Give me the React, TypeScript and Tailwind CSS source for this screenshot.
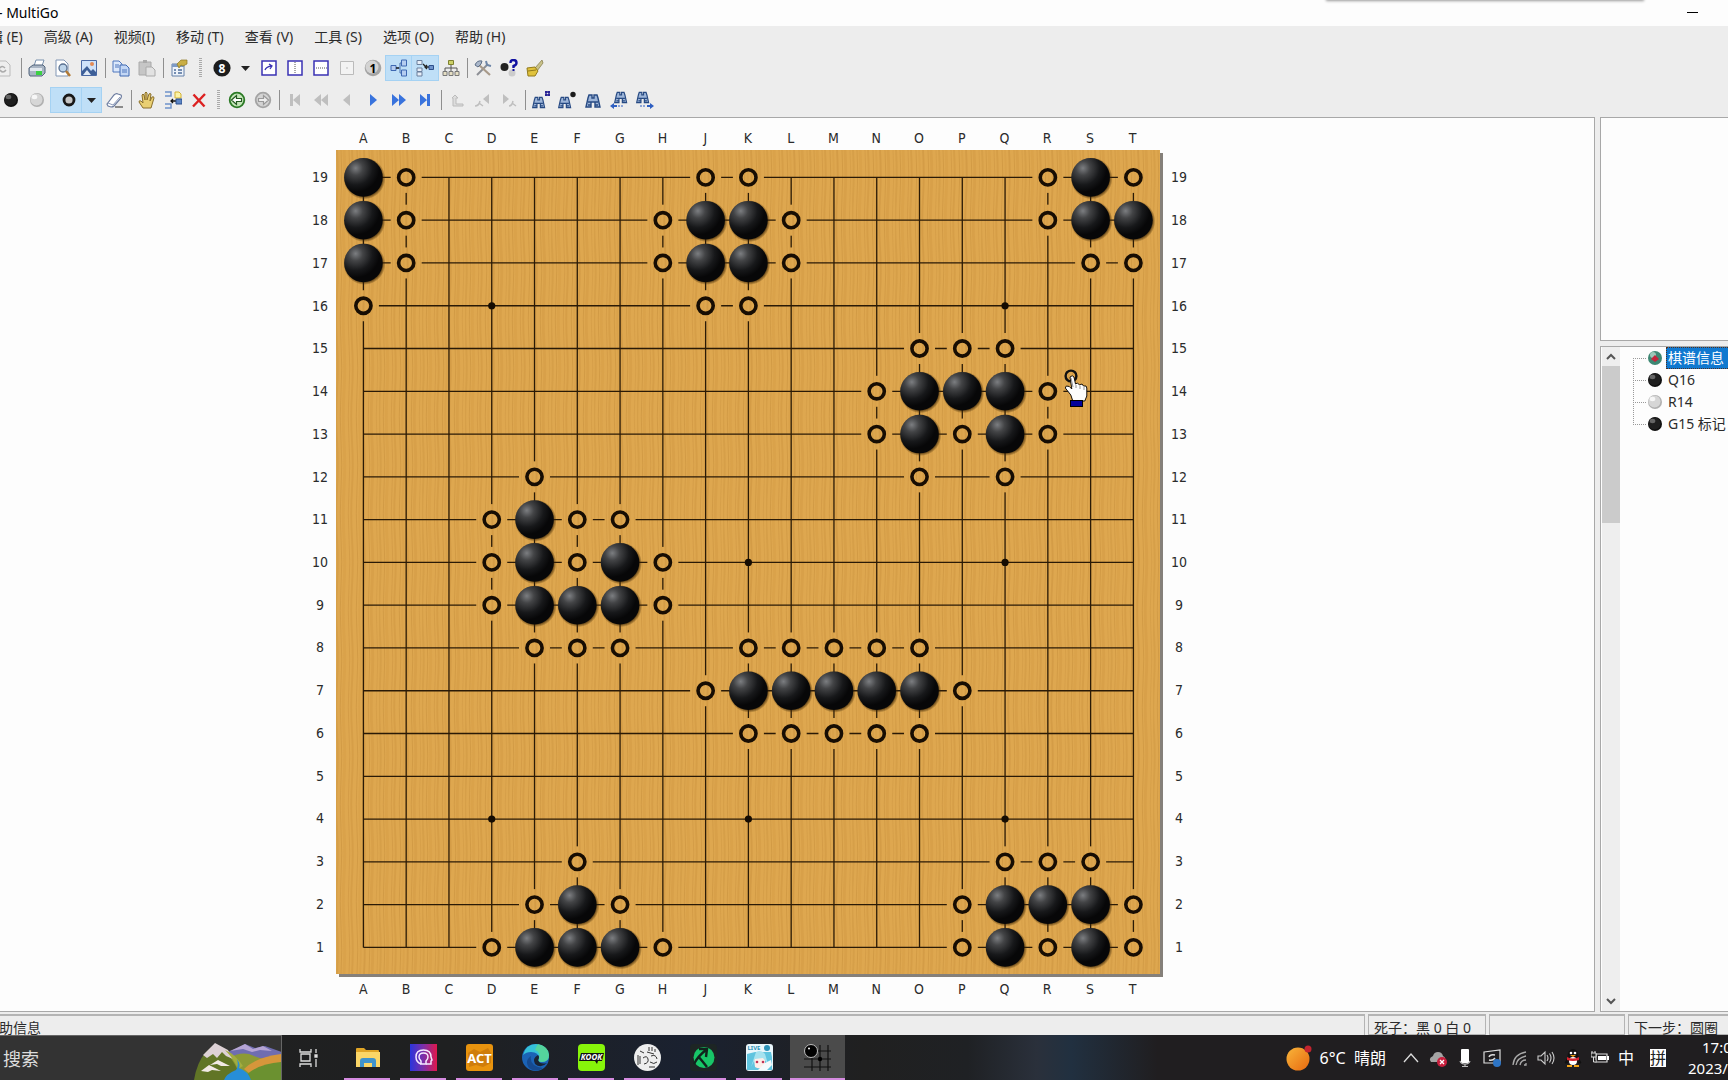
import { ReactNode } from 'react';

const COLS = 'ABCDEFGHJKLMNOPQRST'.split('');
const ROWS = Array.from({ length: 19 }, (_, i) => 19 - i);

const STONES = 'A19 A18 A17 J18 K18 J17 K17 S19 S18 T18 O14 P14 Q14 O13 Q13 E11 E10 G10 E9 F9 G9 K7 L7 M7 N7 O7 F2 E1 F1 G1 Q2 R2 S2 Q1 S1'.split(' ');
const MARKS = ('B19 B18 B17 A16 J19 K19 H18 L18 H17 L17 J16 K16 R19 T19 R18 S17 T17 O15 P15 Q15 N14 R14 N13 P13 R13 O12 Q12 '
    + 'E12 D11 F11 G11 D10 F10 H10 D9 H9 E8 F8 G8 K8 L8 M8 N8 O8 J7 P7 K6 L6 M6 N6 O6 F3 E2 G2 D1 H1 Q3 R3 S3 P2 T2 P1 R1 T1').split(' ');
const STARS = 'D16 Q16 K10 Q10 D4 K4 Q4'.split(' ');

const line = (i: number) => 27.4 + (i * 770) / 18;
const point = (name: string) => ({ x: line(COLS.indexOf(name[0])), y: line(19 - Number(name.slice(1))) });

const streaks = [[1, 2, 0.3], [5, 1, 0.5], [8, 3, 0.2], [13, 1, 0.4], [16, 2, 0.35], [21, 1, 0.5], [24, 2, 0.2], [28, 2, 0.4], [33, 1, 0.5], [36, 3, 0.25], [41, 1, 0.3]];

function Board() {
    return (
        <svg width="827" height="827" viewBox="0 0 827 827" className="block">
            <defs>
                <radialGradient id="stone" cx="0.3" cy="0.26" r="0.62">
                    <stop offset="0" stopColor="#7c7e81" />
                    <stop offset="0.3" stopColor="#434446" />
                    <stop offset="0.7" stopColor="#17181a" />
                    <stop offset="1" stopColor="#070708" />
                </radialGradient>
                <radialGradient id="shade">
                    <stop offset="0.86" stopColor="#3a2404" stopOpacity="0.7" />
                    <stop offset="1" stopColor="#3a2404" stopOpacity="0" />
                </radialGradient>
                <pattern id="wood" width="43" height="97" patternUnits="userSpaceOnUse">
                    <rect width="43" height="97" fill="#dea74f" />
                    {streaks.map(([x, w, o]) => (
                        <path key={x} d={`M${x} 0q1.5 24 0 48t0 49`} stroke="#c68d39" strokeWidth={w} opacity={o} fill="none" />
                    ))}
                </pattern>
                <mask id="gaps" maskUnits="userSpaceOnUse" x="0" y="0" width="827" height="827">
                    <rect width="827" height="827" fill="#fff" />
                    {MARKS.map((m) => <rect key={m} x={point(m).x - 15.5} y={point(m).y - 15.5} width="31" height="31" fill="#000" />)}
                </mask>
            </defs>
            <rect x="3" y="3" width="824" height="824" fill="#85807a" />
            <rect width="824" height="824" fill="url(#wood)" />
            <g mask="url(#gaps)" stroke="#2a1a06" strokeWidth="1.3">
                {COLS.map((c, i) => (
                    <g key={c}>
                        <path d={`M${line(i)} ${line(0)}V${line(18)}`} />
                        <path d={`M${line(0)} ${line(i)}H${line(18)}`} />
                    </g>
                ))}
            </g>
            {STARS.map((s) => <circle key={s} cx={point(s).x} cy={point(s).y} r="3.6" fill="#150c02" />)}
            {MARKS.map((m) => <circle key={m} cx={point(m).x} cy={point(m).y} r="7.6" fill="none" stroke="#170d03" strokeWidth="3.6" />)}
            {STONES.map((s) => (
                <g key={s}>
                    <circle cx={point(s).x + 1} cy={point(s).y + 1} r="21" fill="url(#shade)" />
                    <circle cx={point(s).x} cy={point(s).y} r="19.3" fill="url(#stone)" />
                </g>
            ))}
            {/* hand cursor */}
            <g transform="translate(-1 0)">
                <circle cx="736" cy="226" r="5.4" fill="none" stroke="#111" strokeWidth="2.4" />
                <path d="M735 227q2.500-2.500 4 0l1.500 7 2-1 2 2 2.500-1 1.500 2 2.500 0 .8 2v8l-2 5h-12l-2-6-5.500-7 1-2 3 .5 2.500 2.500z" fill="#fdfdfd" stroke="#15100a" strokeWidth="1" />
                <path d="M736 228l2 9M741 235v3M745 236v3M749 237v3" stroke="#777" strokeWidth="0.8" />
                <rect x="735.500" y="250.500" width="12" height="6" fill="#02029a" stroke="#000" />
            </g>
        </svg>
    );
}

function Icon({ children, size = 18 }: { children: ReactNode, size?: number }) {
    return <svg width={size} height={size} viewBox="0 0 18 18" fill="none" className="shrink-0">{children}</svg>;
}

const Ball = ({ fill, rim, shine }: { fill: string, rim: string, shine: string }) => (
    <>
        <circle cx="9" cy="9" r="7" fill={rim} />
        <circle cx="8.500" cy="8.500" r="6" fill={fill} />
        <ellipse cx="6.500" cy="6" rx="2.800" ry="2.200" fill={shine} opacity="0.8" />
    </>
);

const Binoculars = () => (
    <path d="M2 16l2-9 1-3h3v3h2V4h3l1 3 2 9h-5v-5H7v5z M4 11h3M11 11h3M4 14h3M11 14h3" fill="#9db5d8" stroke="#274a83" strokeWidth="1.400" />
);

const Arrow = ({ color, d }: { color: string, d: string }) => <path d={d} fill={color} />;

const blue = '#3973dd';
const gray = '#bfbfbf';

const icons: Record<string, ReactNode> = {
    refresh: <><path d="M0 2h10l4 4v11H0z" fill="#eee" stroke="#bbb" /><path d="M4 9q2-3 5 0M10 11q-3 4-6 0" stroke="#aaa" strokeWidth="1.500" /></>,
    print: <>
        <path d="M6 7l2-6h8l-2 6z" fill="#fff" stroke="#7890ad" />
        <path d="M1 9l4-3h10l2 2v6l-3 3H2l-1-2z" fill="#a9b5c4" stroke="#53657c" />
        <path d="M2 9h12v3H2z" fill="#e2e8ef" /><path d="M8 12h6v4H8z" fill="#3cd044" />
    </>,
    preview: <>
        <path d="M2 1h8l4 4v12H2z" fill="#fff" stroke="#8297b5" />
        <circle cx="9" cy="9" r="4" fill="#bdd4ea" stroke="#5a7191" strokeWidth="1.300" />
        <path d="M12 12l4 5" stroke="#b17a35" strokeWidth="2.500" />
    </>,
    picture: <>
        <path d="M1.500 1.500h15v15h-15z" fill="#cfe2fa" stroke="#4a69a4" />
        <path d="M2 16V12l5-5 4 5 2-2 3 3v3z" fill="#3d5f98" /><path d="M3 16l4-5 4 5z" fill="#dfe9f6" />
        <circle cx="12" cy="5" r="2" fill="#e38a55" />
    </>,
    copy: <>
        <path d="M1 2h6l3 3v8H1z" fill="#dbe8fb" stroke="#4f77bd" />
        <path d="M8 6h6l3 3v8H8z" fill="#c3d7f5" stroke="#3e68b2" /><path d="M3 6h4M3 8h4M10 11h5M10 13h5" stroke="#4f77bd" />
    </>,
    paste: <><path d="M1 3h12v13H1z" fill="#c6c6c6" stroke="#aaa" /><path d="M5 1h4v3H5z" fill="#aaa" /><path d="M8 8h6l3 3v6H8z" fill="#e2e2e2" stroke="#aaa" /></>,
    props: <>
        <path d="M2 5h12v12H2z" fill="#eef3fa" stroke="#6480a8" /><path d="M2 5h12v3H2z" fill="#7d9ac6" />
        <path d="M4 11h2M4 14h2M8 11h4M8 14h4" stroke="#4e6d9b" strokeWidth="1.300" />
        <path d="M7 5l4-4 6 0v4l-4 2-2-1-2 3z" fill="#c9ae45" stroke="#8d7720" strokeWidth="0.700" />
    </>,
    eight: <><circle cx="9" cy="9" r="8.600" fill="#1d1d1d" /><text x="9" y="13.500" textAnchor="middle" fontSize="12" fontWeight="700" fill="#fff">8</text></>,
    one: <><circle cx="9" cy="9" r="8.300" fill="#a4a4a4" /><circle cx="8" cy="8" r="6.500" fill="#d3d3d3" /><text x="9" y="13.500" textAnchor="middle" fontSize="12" fontWeight="700" fill="#000">1</text></>,
    boxArrow: <><path d="M2 2h14v14H2z" fill="#fff" stroke="#3a32b4" strokeWidth="1.500" /><path d="M5 11q1-3 6-4M9 5l3 2-2 3" stroke="#3a32b4" strokeWidth="1.300" /></>,
    boxV: <><path d="M2 2h14v14H2z" fill="#fff" stroke="#3a32b4" strokeWidth="1.500" /><path d="M9 3v12" stroke="#555" strokeDasharray="1 1" /></>,
    boxH: <><path d="M2 2h14v14H2z" fill="#fff" stroke="#3a32b4" strokeWidth="1.500" /><path d="M4 9h11" stroke="#555" strokeDasharray="1 1" /></>,
    boxDot: <><path d="M2.500 2.500h13v13h-13z" fill="#f3f3f3" stroke="#bbb" /><path d="M8 9h2" stroke="#bbb" /></>,
    tree: <>
        <path d="M6 9h4M10 4v10M10 4h2M10 14h2" stroke="#4b71ad" />
        <path d="M1 6.500h5v5H1zM11.500 1h5v6h-5zM11.500 11h5v6h-5z" fill="#b5cdf0" stroke="#3e68b2" /><path d="M6 9h3" stroke="#222" strokeWidth="1.500" />
    </>,
    treeCut: <>
        <path d="M1 1.500h5v4H1zM1 9h5v3.500H1zM1 13h5v4H1z" fill="#e7eef8" stroke="#6b7f9c" />
        <path d="M7 5l2 2M9 8h4M11 6l-2 2 2 2" stroke="#222" strokeWidth="1.300" /><path d="M13 6.500h4.500v4H13z" fill="#6f94cc" stroke="#2d4f8b" />
    </>,
    org: <>
        <path d="M9 5v4M3 12V9h12v3M9 9v3" stroke="#555" /><path d="M6.500 1.500h5v4h-5z" fill="#ccd068" stroke="#7e8130" />
        <path d="M1 12.500h4v4H1zM7 12.500h4v4H7zM13 12.500h4v4h-4z" fill="#e6dfc4" stroke="#777" />
    </>,
    tools: <>
        <path d="M3 16L14 5" stroke="#8d8f95" strokeWidth="2" /><path d="M12 2l1 4 4 1" stroke="#6e86a8" strokeWidth="2" />
        <path d="M5 6l11 10" stroke="#a89a8a" strokeWidth="2.200" /><path d="M1 6q2-5 7-4l-1 3-3 3z" fill="#aab7ca" stroke="#5e6f88" />
    </>,
    help: <>
        <circle cx="4.500" cy="8" r="4" fill="#222" /><circle cx="12" cy="14" r="3.500" fill="#ccc" />
        <path d="M10.500 4q0-3 3-3t3 3q0 2-3 3v2" stroke="#1010a0" strokeWidth="2.400" /><path d="M12.500 10h2v2h-2z" fill="#1010a0" />
    </>,
    brush: <><path d="M9 9l7-8 1 3-6 8z" fill="#c9c28a" stroke="#8a8250" strokeWidth="0.800" /><path d="M1 9l8-1 3 4-3 5-7 0z" fill="#e0c23c" stroke="#927a1d" /><path d="M2 12l8-1" stroke="#927a1d" /></>,
    black: <Ball fill="#1f1f1f" rim="#101010" shine="#777" />,
    white: <Ball fill="#d6d6d6" rim="#b0b0b0" shine="#fff" />,
    ring: <circle cx="9" cy="9" r="5" fill="#c6c6c6" stroke="#181818" strokeWidth="2.800" />,
    eraser: <><path d="M1 13l7-9q2-2 4-1l3 1q1 1 0 3l-7 8q-1 1-3 1l-3-1z" fill="#fff" stroke="#6d7da0" strokeWidth="1.200" /><path d="M2 12l5 2 7-8" stroke="#8b9aba" /><path d="M9 16h8" stroke="#555" strokeWidth="1.300" /></>,
    hand: <path d="M5 17l-4-6q0-2 2-1l2 2-1-8q1-2 2 0l1 5V2q1-2 2 0v7l2-6q1-1 2 0l-1 7 2-4q2-1 2 1l-3 10z" fill="#e9cf72" stroke="#8a6f2c" />,
    branch: <>
        <path d="M1 1h6v4H1M1 13h6v4H1" stroke="#6f93ca" strokeWidth="1.500" /><path d="M11 1h4l2 2v4h-6z" fill="#fbf3a8" stroke="#d3b234" />
        <path d="M7 10h5M9 8l-2 2 2 2" stroke="#111" strokeWidth="1.300" /><path d="M12 8h6v5h-6z" fill="#5d86c6" stroke="#2d4f8b" />
    </>,
    remove: <path d="M3.500 3.500l11 12M15 3L3 15.500" stroke="#dc2020" strokeWidth="2.400" />,
    back: <><circle cx="9" cy="9" r="7.300" fill="#c4e5b9" stroke="#2b7a25" strokeWidth="1.800" /><path d="M3.500 9l5-4.500v3h5v3h-5v3z" fill="#fff" stroke="#245a20" strokeWidth="1.200" /></>,
    forward: <><circle cx="9" cy="9" r="7.300" fill="#d3d3d3" stroke="#a4a4a4" strokeWidth="1.800" /><path d="M14.500 9l-5-4.500v3h-5v3h5v3z" fill="#eee" stroke="#999" strokeWidth="1.200" /></>,
    first: <Arrow color={gray} d="M4 3h3v12H4zM14 3v12L7 9z" />,
    rewind: <Arrow color={gray} d="M9 3v12L2 9zM16 3v12L9 9z" />,
    prev: <Arrow color={gray} d="M12 3v12L5 9z" />,
    next: <Arrow color={blue} d="M6 3v12l7-6z" />,
    fast: <Arrow color={blue} d="M2 3v12l7-6zM9 3v12l7-6z" />,
    last: <Arrow color={blue} d="M4 3v12l7-6zM11 3h3v12h-3z" />,
    up: <path d="M4 7l3-3 3 3H8v6h7v2H5V7z" fill="#ddd" stroke="#bbb" />,
    varPrev: <><path d="M15 3v10L9 8z" fill={gray} /><path d="M1 15q4 0 5-5M5 12l4 3" stroke={gray} strokeWidth="1.500" /></>,
    varNext: <><path d="M3 3v10l6-5z" fill={gray} /><path d="M9 15q3 0 4-5M12 12l4 3" stroke={gray} strokeWidth="1.500" /></>,
    findMark: <><g transform="translate(-1 3) scale(.85)"><Binoculars /></g><path d="M13 1h5M13 4h5M14 0v5M17 0v5" stroke="#15108c" strokeWidth="1.300" /></>,
    findStone: <><g transform="translate(-1 3) scale(.85)"><Binoculars /></g><circle cx="15" cy="3.500" r="2.700" fill="#1b1b1b" /></>,
    find: <Binoculars />,
    findPrev: <><g transform="translate(3 -2) scale(.85)"><Binoculars /></g><path d="M0 15l4-3v2h3v2H4v2z" fill="#2e5fc2" /><path d="M8 15h6" stroke="#2e5fc2" strokeDasharray="2 1" /></>,
    findNext: <><g transform="translate(-1 -2) scale(.85)"><Binoculars /></g><path d="M18 15l-4-3v2h-3v2h3v2z" fill="#2e5fc2" /><path d="M4 15h6" stroke="#2e5fc2" strokeDasharray="2 1" /></>,
};

function Tool({ name, active = false }: { name: string, active?: boolean }) {
    return (
        <button type="button" aria-label={name} className={active ? 'flex h-6 w-[26px] shrink-0 items-center justify-center bg-[#bfdff7] outline outline-[#a5d2f3]' : 'flex h-6 w-[26px] shrink-0 items-center justify-center'}>
            <Icon>{icons[name]}</Icon>
        </button>
    );
}

const Tools = ({ names }: { names: string }) => <>{names.split(' ').map((n) => <Tool key={n} name={n} />)}</>;
const Sep = () => <span className="flex h-5 w-[6px] shrink-0 justify-center"><span className="w-px bg-[#8f8f8f]" /></span>;
const Grip = ({ width }: { width: string }) => (
    <span className={`flex h-5 shrink-0 justify-center ${width}`}><span className="w-[3px] bg-[repeating-linear-gradient(#aaa_0_1px,#eee_1px_2px)]" /></span>
);
const Caret = () => <svg width="9" height="5" viewBox="0 0 9 5"><path d="M0 0h9L4.500 5z" fill="#222" /></svg>;

const menu = ['编辑 (E)', '高级 (A)', '视频(I)', '移动 (T)', '查看 (V)', '工具 (S)', '选项 (O)', '帮助 (H)'];

function ColumnLabels() {
    return (
        <div className="col-start-2 mr-[3px] grid h-6 grid-cols-[repeat(19,1fr)] items-center px-[6px] text-center">
            {COLS.map((c) => <span key={c}>{c}</span>)}
        </div>
    );
}

function RowLabels() {
    return (
        <div className="mb-[3px] grid grid-rows-[repeat(19,1fr)] items-center py-[6px] text-center">
            {ROWS.map((r) => <span key={r}>{r}</span>)}
        </div>
    );
}

const moves = [
    { text: '棋谱信息 注释', icon: <><circle cx="9" cy="9" r="7" fill="#3d8773" /><circle cx="7" cy="6" r="3" fill="#9cc7b8" /><path d="M5 10l4-4 4 4-4 3z" fill="#c4243c" /></>, selected: true },
    { text: 'Q16', icon: icons.black },
    { text: 'R14', icon: icons.white },
    { text: 'G15 标记', icon: icons.black },
];

function Sidebar() {
    return (
        <aside className="flex w-[128px] shrink-0 flex-col gap-[5px]">
            <div className="h-[224px] border border-r-0 border-[#a8a8a8] bg-[#fdfdfd]" />
            <div className="flex flex-1 border border-r-0 border-[#a8a8a8] bg-[#fdfdfd]">
                <div className="ml-px flex w-[18px] shrink-0 flex-col items-center bg-[#eeeeee] text-[#555]">
                    <button type="button" aria-label="向上滚动" className="flex h-[19px] items-center">
                        <svg width="10" height="7" viewBox="0 0 10 7" fill="none"><path d="M1 6l4-4 4 4" stroke="currentColor" strokeWidth="2" /></svg>
                    </button>
                    <div className="h-[157px] w-full bg-[#cbcbcb]" />
                    <button type="button" aria-label="向下滚动" className="mt-auto flex h-[19px] items-center">
                        <svg width="10" height="7" viewBox="0 0 10 7" fill="none"><path d="M1 1l4 4 4-4" stroke="currentColor" strokeWidth="2" /></svg>
                    </button>
                </div>
                <ul className="relative min-w-0 flex-1 overflow-hidden pl-[13px]">
                    <li aria-hidden="true" className="absolute top-[11px] left-[13px] h-[67px] border-l border-dotted border-[#999]" />
                    {moves.map((m) => (
                        <li key={m.text} className="flex h-[22px] items-center whitespace-nowrap">
                            <span className="w-[13px] shrink-0 border-t border-dotted border-[#999]" />
                            <Icon>{m.icon}</Icon>
                            <span className={m.selected ? 'ml-[2px] border border-dotted border-[#503020] bg-[#1079d0] px-px leading-5 text-white' : 'ml-1 leading-5'}>{m.text}</span>
                        </li>
                    ))}
                </ul>
            </div>
        </aside>
    );
}

const apps: { name: string, icon: ReactNode }[] = [
    { name: '文件资源管理器', icon: <><path d="M2 5q0-1 1-1h7l2 2h12q1 0 1 1v15H2z" fill="#e0a526" /><path d="M2 8h24v15H2z" fill="#fbd667" /><path d="M6 23v-6q0-3 3-3h10q3 0 3 3v6h-4v-4h-8v4z" fill="#3f93cc" /></> },
    { name: '播放器', icon: <><rect width="27" height="27" fill="url(#duo)" /><path d="M11 20q-5-2-5-7 0-7 7.500-7t7.500 7l1 3-1 1v3h-5" fill="none" stroke="#f3e9ff" strokeWidth="1.500" /><path d="M11 20v-3q-2-2-2-4 0-4 4.500-4t4.500 4q0 2-2 4v3z" fill="none" stroke="#f3e9ff" strokeWidth="1.500" /></> },
    { name: 'ACT', icon: <><rect width="27" height="27" rx="3" fill="#e8930e" /><path d="M2 9l6-4 6 3 8-4 3 5v10l-8 4-7-2-7 2z" fill="#cf7d0b" /><text x="13.500" y="18.500" textAnchor="middle" fontSize="13" fontWeight="700" fill="#fff">ACT</text></> },
    { name: 'Edge', icon: <><circle cx="13.500" cy="13.500" r="13.500" fill="#1b63b5" /><path d="M1 11Q4 0 14 0q12 1 13 11 0 7-7 7-5 0-3-3Q17 8 9 8 4 8 1 11z" fill="#35c1d8" /><path d="M16 0q10 2 11 11 0 7-7 7-5 0-3-3 2-7-4-9 2-5 3-6z" fill="#5fd98a" opacity="0.750" /><path d="M9 12q-2 10 12 12-7 5-14 0-5-7 2-12z" fill="#164a8f" /><path d="M16 11q2 2 0 5 2 5 9 3-6 6-12 1-3-6 3-9z" fill="#1a2434" /></> },
    { name: 'KOOK', icon: <><rect width="27" height="27" rx="4" fill="#87f50a" /><path d="M3 9h23l-2 8h-4l-1 3-2-3H1z" fill="#111" /><text x="13.500" y="16" textAnchor="middle" fontSize="8" fontWeight="700" fontStyle="italic" fill="#fff">KOOK</text></> },
    { name: '漫画', icon: <><circle cx="13.500" cy="13.500" r="13.500" fill="#eee" /><path d="M6 7l4 2M15 3v4M18 3v4M21 5v3M4 11v10M6 12v8M9 14q4-3 5 1t-4 5M17 12q5-2 6 3M16 18q4 3 7 0M15 23h6M13 8l7 2" stroke="#333" fill="none" /></> },
    { name: '加速器', icon: <><rect width="27" height="27" rx="4" fill="#1d2524" /><circle cx="14" cy="13.500" r="10.500" fill="#18c768" /><path d="M4 20Q8 12 16 6M9 5l8 0-1 8M8 12q5 6 9 11" stroke="#10241c" strokeWidth="2.400" fill="none" /></> },
    { name: 'LIVE', icon: <><rect width="27" height="27" rx="3" fill="#e9f6fb" /><path d="M1 26V10l8-2h16l1 5v13z" fill="#5fc4df" /><path d="M8 15q6-4 11 0v7q-5 4-10 1z" fill="#fdeee8" /><path d="M10 8q5-3 9 2l3 10-5-6-8 1-4 8z" fill="#a6e2ef" /><circle cx="11" cy="18" r="1.300" fill="#c03557" /><circle cx="17" cy="18" r="1.300" fill="#c03557" /><path d="M19 19l6-3 1 5-5 5h-9z" fill="#f4fafc" /><circle cx="21" cy="4" r="3" fill="#2c92b8" /><text x="8" y="6" textAnchor="middle" fontSize="6" fontWeight="700" fill="#2c92b8">LIVE</text></> },
];

const tray: { name: string, icon: ReactNode }[] = [
    { name: '显示隐藏的图标', icon: <path d="M2 13l7-8 7 8" stroke="#ddd" strokeWidth="1.300" /> },
    { name: '云盘', icon: <><path d="M2 13q-3-4 2-6 1-4 5-4 4 0 5 4 3 1 2 6z" fill="#a4a4a4" /><circle cx="13" cy="13" r="5" fill="#c8203e" /><path d="M11 11l4 4M15 11l-4 4" stroke="#fff" strokeWidth="1.300" /></> },
    { name: '麦克风', icon: <><rect x="5" y="0" width="8" height="14" rx="1" fill="#fff" /><path d="M4 12q1 3 5 3t5-3M6 17.500h6M9 15v2" stroke="#bbb" strokeWidth="1.200" /></> },
    { name: '同步', icon: <><path d="M1 3l16-2v13l-16 0z" stroke="#ddd" strokeWidth="1.200" /><path d="M6 8q1-3 6-2M12 9q-2 3-6 2" stroke="#ddd" strokeWidth="1.400" /><circle cx="14" cy="14" r="4" fill="#2d74c4" /></> },
    { name: '网络', icon: <path d="M3 16Q4 5 16 3M6 16Q7 9 16 7M10 16q1-5 6-5M14 16h2v-2" stroke="#aaa" strokeWidth="1.300" /> },
    { name: '音量', icon: <path d="M1 7h3l4-4v12l-4-4H1zM10 6q2 3 0 6M12.500 4.500q3 4.500 0 9M15 3q4 6 0 12" stroke="#ccc" strokeWidth="1.100" /> },
    { name: 'QQ', icon: <><ellipse cx="9" cy="8" rx="5.500" ry="8" fill="#111" /><path d="M3 10l-2 4 3 0M15 10l2 4-3 0" fill="#111" stroke="#111" /><ellipse cx="9" cy="12" rx="4" ry="4" fill="#fff" /><circle cx="7" cy="4" r="1.300" fill="#fff" /><circle cx="11" cy="4" r="1.300" fill="#fff" /><path d="M3 8q6 3 12 0v3q-6 2-12 0z" fill="#d5222d" /><path d="M6 6h6l-3 2zM3 16h5v2H3zM10 16h5v2h-5z" fill="#f3a316" /></> },
    { name: '电池', icon: <><path d="M5 5h11v8H5z" stroke="#ddd" strokeWidth="1.200" /><path d="M7 7h8v4H7zM16 7h2v4h-2z" fill="#fff" /><path d="M0 4h5v4H0zM1 2v2M4 2v2M2.500 8v5h3" fill="#222" stroke="#ddd" /></> },
];

function Taskbar() {
    return (
        <footer className="flex h-[45px] shrink-0 overflow-hidden bg-[linear-gradient(90deg,#202020_0%,#1f2021_26%,#1a2130_40%,#202020_50%,#1f2124_56%,#2a303b_60%,#213040_62%,#201e20_67%,#201e20_100%)] text-white">
            <label className="flex w-[282px] shrink-0 border-t border-r border-[#666] bg-[#333]">
                <input type="text" aria-label="搜索" placeholder="搜索" className="h-[46px] w-[194px] bg-transparent pl-[3px] text-[18px] text-[#ddd] outline-none placeholder:text-[#ddd]" />
                <svg width="87" height="37" viewBox="0 0 87 37" className="mt-[7px]">
                    <path d="M30 10l12-4 9-5 10 4 10-2 17 6v20H30z" fill="#6f6db0" /><path d="M36 8l15-7 8 5 10-3 9 5-12-1-8 2-9-3z" fill="#b5a4d4" />
                    <path d="M34 16q14-9 26-3t27 1v23H34z" fill="#8c9a35" /><path d="M50 26q12-12 37-15v12L60 34z" fill="#d6963b" /><path d="M48 37q12-16 39-18v18z" fill="#6b9130" />
                    <path d="M0 37q3-18 12-28l9-8 9 5q12 14 18 31z" fill="#617526" /><path d="M9 12l12-12 13 7 5 9-7-3-4-4-5 6-4-4-6 4z" fill="#ddd1d5" />
                    <path d="M16 22l8-5 12 6-9 0-4-2z M7 28l8-6 12 6-9-1-4 2z" fill="#f2e9e6" /><path d="M31 7q10 4 18 16l-5 3q-4-10-13-19z" fill="#a3ad3e" />
                    <path d="M43 16q4 6 2 9 9 3 12 12H30q2-6 12-10 3-4 1-11z" fill="#278ed8" />
                </svg>
            </label>
            <button type="button" aria-label="任务视图" className="flex w-[57px] shrink-0 items-center pl-[17px]">
                <svg width="20" height="20" viewBox="0 0 20 20" fill="none" stroke="#ddd" strokeWidth="1.300"><path d="M1 1v3h11V1M2 6h9v7H2zM1 19v-3h11v3M17 1v4M17 11v8" /><path d="M16 7h2v2h-2z" fill="#fff" /></svg>
            </button>
            {apps.map((a) => (
                <button key={a.name} type="button" aria-label={a.name} className="flex w-14 shrink-0 flex-col items-center pt-[9px]">
                    <svg width="27" height="27" viewBox="0 0 27 27">
                        <defs><linearGradient id="duo"><stop stopColor="#2a35dc" /><stop offset="0.500" stopColor="#7d2fa8" /><stop offset="1" stopColor="#e0184c" /></linearGradient></defs>
                        {a.icon}
                    </svg>
                    <span className="mt-auto h-[2px] w-[46px] bg-[#d58be0]" />
                </button>
            ))}
            <button type="button" aria-label="MultiGo" className="ml-[3px] flex w-[55px] shrink-0 flex-col items-center border-b-2 border-[#d58be0] bg-[#4b4b4b] pt-[9px]">
                <svg width="27" height="27" viewBox="0 0 27 27" fill="none"><path d="M8 12v15M16 1v26M24 1v26M12 7h15M0 15h27M0 23h27" stroke="#111" strokeWidth="1.200" /><circle cx="7" cy="7" r="6.500" fill="#000" stroke="#bbb" /><circle cx="5" cy="4.500" r="1" fill="#fff" /><circle cx="16" cy="15" r="2.200" fill="#000" /></svg>
            </button>
            <div className="ml-auto flex items-center">
                <button type="button" className="mr-3 flex items-center gap-2 text-base whitespace-pre">
                    <svg width="26" height="26" viewBox="0 0 26 26"><defs><linearGradient id="sun" x2="1" y2="1"><stop stopColor="#f8b53a" /><stop offset="1" stopColor="#e8690f" /></linearGradient></defs><circle cx="12" cy="14" r="11.500" fill="url(#sun)" /><circle cx="22" cy="4" r="3.500" fill="#c2242e" /></svg>
                    6°C  晴朗
                </button>
                {tray.map((t) => <button key={t.name} type="button" aria-label={t.name} className="flex w-[27px] justify-center"><Icon>{t.icon}</Icon></button>)}
                <button type="button" className="ml-1 text-base leading-5">中</button>
                <button type="button" className="ml-4 bg-white text-base leading-[18px] text-[#222]">拼</button>
                <div className="ml-[22px] w-10 text-[15px] leading-[21px] whitespace-nowrap">
                    <div className="pl-[14px]">17:0</div>
                    <div>2023/</div>
                </div>
            </div>
        </footer>
    );
}

export default function App() {
    return (
        <div className="flex h-screen flex-col overflow-hidden bg-[#ededed] font-['Noto_Sans','Noto_Sans_CJK_SC',sans-serif] text-sm text-[#2b2b2b]">
            <header className="relative flex h-[26px] shrink-0 items-center bg-[#fdfdfd] text-black">
                <h1 className="-ml-[2px]">- MultiGo</h1>
                <button type="button" aria-label="最小化" className="mr-[30px] ml-auto h-[3px] w-[11px] border-t border-black" />
                <span className="absolute -top-[6px] right-[84px] h-[6px] w-[318px] shadow-[0_1px_3px_#999]" />
            </header>
            <nav className="-ml-[25px] flex h-[23px] shrink-0 gap-[21px] pt-px">
                {menu.map((m) => <button key={m} type="button" className="h-5 leading-5 whitespace-nowrap">{m}</button>)}
            </nav>
            <div className="-ml-2 flex h-9 shrink-0 items-end pb-[5px]">
                <div className="flex h-6 items-center">
                    <Tools names="refresh" /><Sep /><Tools names="print preview picture" /><Sep /><Tools names="copy paste" /><Sep /><Tools names="props" />
                    <Grip width="w-[17px]" />
                    <Tools names="eight" />
                    <button type="button" aria-label="更多" className="flex w-[21px] justify-center"><Caret /></button>
                    <Tools names="boxArrow boxV boxH boxDot one" />
                    <Tool name="tree" active /><Tool name="treeCut" active />
                    <Tools names="org" /><Sep /><Tools names="tools help brush" />
                </div>
            </div>
            <div className="-ml-[2px] flex h-8 shrink-0 items-start pt-[3px]">
                <div className="flex h-6 items-center">
                    <Tools names="black white" />
                    <div className="mx-px flex h-6 w-[50px] bg-[#bfdff7] outline outline-[#a5d2f3]">
                        <button type="button" aria-label="圆圈" className="flex flex-1 items-center justify-center pl-[6px]"><Icon>{icons.ring}</Icon></button>
                        <button type="button" aria-label="标记类型" className="flex w-5 items-center justify-center border-l border-[#a5d2f3]"><Caret /></button>
                    </div>
                    <Tools names="eraser" /><Sep /><Tools names="hand branch remove" />
                    <Grip width="w-3" />
                    <Tools names="back forward" /><Sep /><Tools names="first rewind prev next fast last" /><Sep />
                    <Tools names="up varPrev varNext" /><Sep /><Tools names="findMark findStone find findPrev findNext" />
                </div>
            </div>
            <main className="flex min-h-0 flex-1 gap-[5px] pb-[2px]">
                <section className="flex min-w-0 flex-1 justify-center border border-l-0 border-[#a8a8a8] bg-[#fdfdfd] pr-[95px]">
                    <div className="grid grid-cols-[32px_827px_32px] content-start pt-2 font-['DejaVu_Sans_Condensed','DejaVu_Sans',sans-serif] leading-5">
                        <ColumnLabels />
                        <div className="col-start-1 grid"><RowLabels /></div>
                        <Board />
                        <div className="grid"><RowLabels /></div>
                        <ColumnLabels />
                    </div>
                </section>
                <Sidebar />
            </main>
            <div className="flex h-[21px] shrink-0 gap-[3px] overflow-hidden leading-6 whitespace-nowrap">
                <div className="min-w-0 flex-1 border-t-2 border-r border-[#b4b4b4]"><span className="-ml-[15px]">帮助信息</span></div>
                <div className="w-[118px] border border-t-2 border-[#b4b4b4] pl-[5px]">死子：黑 0 白 0</div>
                <div className="w-[136px] border border-t-2 border-[#b4b4b4]" />
                <div className="w-[100px] border border-t-2 border-r-0 border-[#b4b4b4] pl-[5px]">下一步：圆圈</div>
            </div>
            <Taskbar />
        </div>
    );
}
